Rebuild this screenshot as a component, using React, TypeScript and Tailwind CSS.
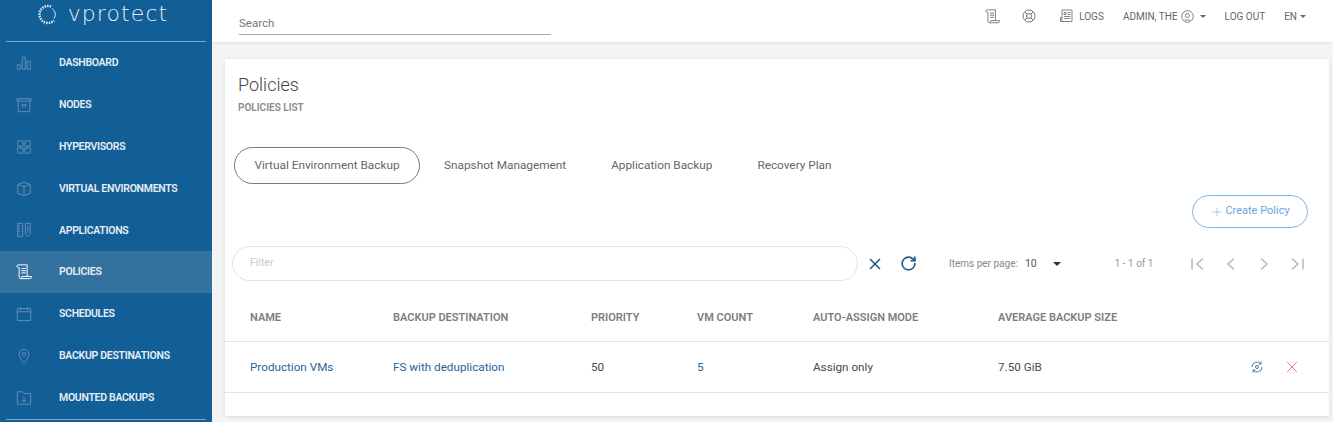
import React from 'react';
import { Plus, RotateCw, X } from 'lucide-react';

const navIcon = 'w-[16px] h-[16px]';

const PoliciesIcon = ({ className }: { className?: string }) => (
  <svg className={className} viewBox="0 0 18 18" fill="none" stroke="currentColor" strokeWidth="1.100">
    <path d="M1 2.500c0-1 .7-1.500 1.500-1.500h10v13" />
    <path d="M1 2.500c0 1.500 2.500 1.500 2.500 1.500v10.500c0 1 .7 2 2 2h10.500c1 0 1.500-1 1.500-2.500h-11c0 1.500-.5 2.500-1.500 2.500" />
    <path d="M6 5h5M6 7.500h5M6 10h5" />
  </svg>
);

const navItems: { label: string; icon: React.ReactNode }[] = [
  {
    label: 'DASHBOARD',
    icon: (
      <svg className={navIcon} viewBox="0 0 18 18" fill="none" stroke="currentColor" strokeWidth="1.100">
        <path d="M1.500 11h3.500v5h-3.500zM7 2.500h3.500v13.500h-3.500zM12.500 7h3.500v9h-3.500z" />
      </svg>
    ),
  },
  {
    label: 'NODES',
    icon: (
      <svg className={navIcon} viewBox="0 0 18 18" fill="none" stroke="currentColor" strokeWidth="1.100">
        <path d="M1 2h16v2.500h-16zM2.500 4.500v12h13v-12M7 8.500h4v2.500h-4z" />
      </svg>
    ),
  },
  {
    label: 'HYPERVISORS',
    icon: (
      <svg className={navIcon} viewBox="0 0 18 18" fill="none" stroke="currentColor" strokeWidth="1.100">
        <path d="M2 2h6v6h-6zM10 2h6v6h-6zM2 10h6v6h-6zM10 10h6v6h-6z" />
      </svg>
    ),
  },
  {
    label: 'VIRTUAL ENVIRONMENTS',
    icon: (
      <svg className={navIcon} viewBox="0 0 18 18" fill="none" stroke="currentColor" strokeWidth="1.100">
        <path d="M9 1.500l7 2.500v10l-7 2.500-7-2.500v-10zM2 4l7 2.500 7-2.500M9 6.500v10" />
      </svg>
    ),
  },
  {
    label: 'APPLICATIONS',
    icon: (
      <svg className={navIcon} viewBox="0 0 18 18" fill="none" stroke="currentColor" strokeWidth="1.100">
        <path d="M2 1.500h5.500v15h-5.500zM2 4.500h2.500M2 7.500h2.500M2 10.500h2.500M2 13.500h2.500M10.500 1.500h5.500v12l-2.750 3-2.750-3zM13.250 4v8" />
      </svg>
    ),
  },
  { label: 'POLICIES', icon: <PoliciesIcon className={navIcon} /> },
  {
    label: 'SCHEDULES',
    icon: (
      <svg className={navIcon} viewBox="0 0 18 18" fill="none" stroke="currentColor" strokeWidth="1.100">
        <path d="M1.500 3h15v13.500h-15zM1.500 6.500h15M5 1v3.500M13 1v3.500" />
      </svg>
    ),
  },
  {
    label: 'BACKUP DESTINATIONS',
    icon: (
      <svg className={navIcon} viewBox="0 0 18 18" fill="none" stroke="currentColor" strokeWidth="1.100">
        <path d="M9 17s-5.500-5.500-5.500-10a5.500 5.500 0 0 1 11 0c0 4.500-5.500 10-5.500 10z" />
        <circle cx="9" cy="7" r="2" />
      </svg>
    ),
  },
  {
    label: 'MOUNTED BACKUPS',
    icon: (
      <svg className={navIcon} viewBox="0 0 18 18" fill="none" stroke="currentColor" strokeWidth="1.100">
        <path d="M1.500 2h6l1.500 2h7.500v12h-15zM9 7.500v6M6.800 11.300l2.200 2.200 2.200-2.200" />
      </svg>
    ),
  },
];

const columns = ['NAME', 'BACKUP DESTINATION', 'PRIORITY', 'VM COUNT', 'AUTO-ASSIGN MODE', 'AVERAGE BACKUP SIZE'];
const gridCols = 'grid grid-cols-[143px_198px_106px_116px_185px_1fr]';

const Caret = ({ className }: { className?: string }) => (
  <span className={`inline-block border-x-[3px] border-t-[3px] border-x-transparent border-t-current ${className ?? ''}`} />
);

const PagerIcon = ({ d, className }: { d: string; className?: string }) => (
  <svg className={`h-[14px] w-[14px] ${className ?? ''}`} viewBox="0 0 14 14" fill="none" stroke="currentColor" strokeWidth="1.500">
    <path d={d} />
  </svg>
);

export default function App() {
  return (
    <div className="flex h-[422px] w-[1333px] overflow-hidden bg-[#f4f4f4] font-['Roboto',sans-serif]">
      <aside className="flex w-[212px] shrink-0 flex-col bg-[#125e97]">
        <div className="mx-[6px] flex h-[42px] shrink-0 items-start justify-center border-b border-[#7fa9c9] pt-[3px] pr-[6px]">
          <svg className="mt-[1px] h-[21px] w-[21px] text-[#dbe7f0]" viewBox="0 0 21 21" fill="none" stroke="currentColor">
            <path d="M13 2.500a8.500 8.500 0 1 0 3 14" strokeWidth="2.500" strokeDasharray="1.500 1" />
            <path d="M14 4.500a7 7 0 0 1 2 10" strokeWidth="1" />
          </svg>
          <span className="ml-[9px] text-[22px] leading-[21px] tracking-[1.100px] text-[#e8eff5] font-['DejaVu_Sans',sans-serif] font-extralight">
            vprotect
          </span>
        </div>
        <nav className="flex flex-col">
          {navItems.map((item) => {
            const active = item.label === 'POLICIES';
            return (
              <div
                key={item.label}
                className={`flex h-[41.875px] items-center pl-[16px] text-[10.500px] font-semibold tracking-[-0.3px] text-[#e6eef5] ${
                  active ? 'bg-[#33729f]' : ''
                }`}
              >
                <span className={`w-[43px] shrink-0 ${active ? 'text-white' : 'text-[#6190b5]'}`}>{item.icon}</span>
                {item.label}
              </div>
            );
          })}
        </nav>
        <div className="mx-[6px] border-t border-[#7fa9c9]" />
      </aside>

      <div className="flex min-w-0 flex-1 flex-col">
        <header className="flex h-[42px] shrink-0 items-center bg-white pr-[27px] pl-[27px] text-[10px] text-[#666] shadow-[0_1px_4px_rgba(0,0,0,0.08)]">
          <div className="mt-[2px] h-[25px] w-[312px] border-b border-[#aaa] text-[11.500px] leading-[26px] text-[#777]">Search</div>
          <div className="ml-auto mb-[10px] flex items-center">
            <PoliciesIcon className="h-[15px] w-[15px] text-[#777]" />
            <svg className="ml-[22px] h-[14px] w-[14px] text-[#777]" viewBox="0 0 14 14" fill="none" stroke="currentColor">
              <circle cx="7" cy="7" r="6" />
              <circle cx="7" cy="7" r="2.500" />
              <path d="M3 3l2.200 2.200M11 3l-2.200 2.200M3 11l2.200-2.200M11 11l-2.200-2.200" />
            </svg>
            <svg className="ml-[23px] h-[14px] w-[14px] text-[#777]" viewBox="0 0 14 14" fill="none" stroke="currentColor" strokeWidth="0.900">
              <path d="M3 1h10v11.500h-11.500v-4h1.500M3 12.500v-11.500M5 3.500h2v2h-2zM8.500 3.500h3M8.500 5.500h3M5 7.500h6.500M5 9.500h6.500" />
            </svg>
            <span className="ml-[6px]">LOGS</span>
            <span className="ml-[19px]">ADMIN, THE</span>
            <svg className="ml-[3px] h-[13px] w-[13px]" viewBox="0 0 13 13" fill="none" stroke="currentColor" strokeWidth="0.800">
              <circle cx="6.500" cy="6.500" r="5.800" />
              <circle cx="6.500" cy="5.500" r="2" />
              <path d="M3.500 10h6" />
            </svg>
            <Caret className="ml-[6px]" />
            <span className="ml-[19px]">LOG OUT</span>
            <span className="ml-[19px]">EN</span>
            <Caret className="ml-[3px]" />
          </div>
        </header>

        <main className="min-h-0 flex-1 pt-[17px] pr-[4px] pb-[6px] pl-[13px]">
          <section className="h-full bg-white shadow-[0_1px_4px_rgba(0,0,0,0.1)]">
            <div className="pt-[15px] pl-[13px]">
              <h1 className="text-[18px] leading-[21px] font-light text-[#444]">Policies</h1>
              <p className="mt-[7px] text-[10px] leading-[12px] font-semibold text-[#8a8a8a]">POLICIES LIST</p>
            </div>

            <div className="mt-[33px] flex items-center pl-[9px] text-[11.800px] text-[#666]">
              <div className="flex h-[37px] w-[186px] items-center justify-center rounded-full border border-[#777]">
                Virtual Environment Backup
              </div>
              <span className="ml-[24px]">Snapshot Management</span>
              <span className="ml-[45px]">Application Backup</span>
              <span className="ml-[45px]">Recovery Plan</span>
            </div>

            <div className="mt-[11px] flex justify-end pr-[21px]">
              <button className="flex h-[33px] w-[116px] items-center justify-center rounded-full border border-[#7ab6ea] text-[11px] text-[#6aa5dd]">
                <Plus className="mr-[1px] h-[14px] w-[14px]" strokeWidth={1} />
                Create Policy
              </button>
            </div>

            <div className="mt-[18px] flex h-[35px] items-center pl-[7px]">
              <div className="flex h-[35px] w-[626px] items-center rounded-full border border-[#e4e4e4] pb-[2px] pl-[17px] text-[10.500px] text-[#c8c8c8]">
                Filter
              </div>
              <X className="ml-[8px] h-[18px] w-[18px] text-[#215c8c]" strokeWidth={2.200} />
              <RotateCw className="ml-[16px] h-[17px] w-[17px] text-[#215c8c]" strokeWidth={2.400} />
              <span className="ml-[32px] text-[10px] text-[#888]">Items per page:</span>
              <span className="ml-[7px] text-[10.500px] text-[#555]">10</span>
              <Caret className="ml-[16px] border-x-[4px] border-t-[4px] text-[#333]" />
              <span className="ml-[54px] text-[10px] text-[#999]">1 - 1 of 1</span>
              <div className="ml-[38px] flex items-center text-[#b5b5b5]">
                <PagerIcon d="M1 1.500v11M12 1.500l-6 5.500 6 5.500" />
                <PagerIcon className="ml-[19px]" d="M10 1.500l-6 5.500 6 5.500" />
                <PagerIcon className="ml-[19px]" d="M4 1.500l6 5.500-6 5.500" />
                <PagerIcon className="ml-[19px]" d="M13 1.500v11M2 1.500l6 5.500-6 5.500" />
              </div>
            </div>

            <div className={`${gridCols} mt-[16px] h-[45px] items-center border-b border-[#e4e4e4] pb-[2px] pl-[25px] text-[11px] font-semibold text-[#7d7d7d]`}>
              {columns.map((c) => (
                <span key={c}>{c}</span>
              ))}
            </div>
            <div className={`${gridCols} relative h-[51px] items-center border-b border-[#e4e4e4] pt-[2px] pl-[25px] text-[11.700px] text-[#4a4a4a]`}>
              <span className="text-[#2a6496]">Production VMs</span>
              <span className="text-[#2a6496]">FS with deduplication</span>
              <span>50</span>
              <span className="text-[#2a6496]">5</span>
              <span>Assign only</span>
              <span>7.50 GiB</span>
              <div className="absolute top-[16px] right-[28px] flex items-center">
                <svg className="h-[14px] w-[14px] text-[#4d7a9c]" viewBox="0 0 14 14" fill="none" stroke="currentColor">
                  <path d="M2 7a5 5 0 0 1 9-3M12 7a5 5 0 0 1-9 3M11 1.500v2.500h-2.500M3 12.500v-2.500h2.500" />
                  <circle cx="7" cy="7" r="1.500" />
                </svg>
                <X className="ml-[19px] h-[18px] w-[18px] text-[#ee7080]" strokeWidth={1.300} />
              </div>
            </div>
          </section>
        </main>
      </div>
    </div>
  );
}
